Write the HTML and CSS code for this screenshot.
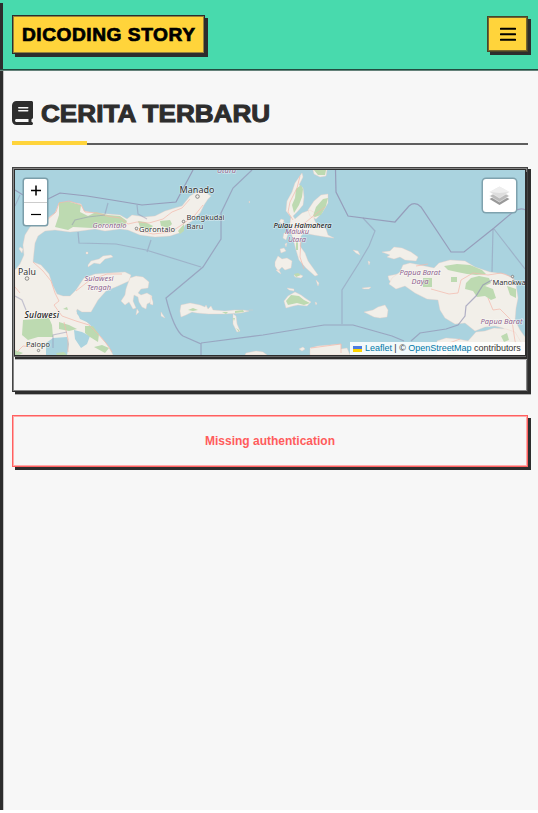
FILE: index.html
```html
<!DOCTYPE html>
<html lang="id">
<head>
<meta charset="utf-8">
<title>Dicoding Story</title>
<link rel="stylesheet" href="styles.css">
</head>
<body>
<div class="page">
  <header class="header">
    <a class="brand"><span class="brand-text">DICODING STORY</span></a>
    <button class="menu" aria-label="Menu"><svg width="16" height="14" viewBox="0 0 16 14"><path d="M.8 1.700h14.400M.8 7.200h14.400M.8 12.700h14.400" stroke="#000" stroke-width="2" stroke-linecap="round"/></svg></button>
  </header>
  <main class="main">
    <h1 class="title">
      <svg class="book" width="21" height="24" viewBox="0 0 448 512"><path fill="#2d2d2d" d="M96 0C43 0 0 43 0 96V416c0 53 43 96 96 96H416c17.700 0 32-14.300 32-32s-14.300-32-32-32V384c17.700 0 32-14.300 32-32V32c0-17.700-14.300-32-32-32H96zm0 384H352v64H96c-17.700 0-32-14.300-32-32s14.300-32 32-32zm32-240c0-8.800 7.200-16 16-16H336c8.800 0 16 7.200 16 16s-7.200 16-16 16H144c-8.800 0-16-7.200-16-16zm16 48H336c8.800 0 16 7.200 16 16s-7.200 16-16 16H144c-8.800 0-16-7.200-16-16s7.200-16 16-16z"/></svg>
      <span class="title-text">CERITA TERBARU</span>
    </h1>
    <section class="map-card">
      <div class="map">
        <svg class="tiles" viewBox="15 170 510 185" width="510" height="185">
          <rect x="15" y="170" width="510" height="185" fill="#aad3df"/>
          <g class="land">
            <path d="M15 270L20 264 24 255 23 245 25 235 30 227 35 222 45 220 55 213 59 203 70 202 81 204 84 211 95 213 108 214 120 215 127 219 132 215 145 217 155 216 165 211 175 208 182 206 186 201 190 196 197 192 203 191 211 196 208 199 204 205 200 213 192 221 185 225 182 232 170 236 155 237 140 235 128 230 120 229 105 231 95 229 80 231 70 232 55 230 45 231 38 236 35 243 34 252 33 262 41 265 49 274 53 286 57 294 63 296 70 296 76 290 84 278 95 274 110 273 125 272 131 275 129 281 118 286 106 291 98 300 91 312 82 312 77 309 77 314 86 321 93 328 101 337 109 347 113 355 15 355z"/>
            <path d="M127 286l3-8 6-2 7 1 6 5-1 6-7 1-3 4 3 2 6-2 5 3-1 6-4 2-1 5-4-2-3-5-1-5-4-2-1 6 3 7-3 1-4-7-4 3-4-4 4-6 1-6zM88 265l3-4 8-2 4-3 8-1 2 2-8 2-5 5-6-1-6 4zM23 249l-3-2-1 2 3 4zM86 252h2v2h-2zM249 201l1 1-1 1z"/>
            <path d="M137 309l2 3-3 3zM151 296l2 6v3l-3-1zM161 312l4 6-4-2z"/>
            <path d="M313 170h14l-1 6-6 1-6-3zM302 173L303 177 299 185 303 188 304 197 303 205 298 211 293 216 295 219 302 213 310 210 315 213 314 219 316 223 326 229 328 235 334 238 326 237 314 235 304 233 301 236 300 246 305 253 308 261 318 275 315 276 306 268 299 260 296 250 293 238 289 229 291 217 286 211 287 201 292 192 295 183zM308 210L314 201 321 195 328 194 328 203 322 213 316 219 310 216z"/>
            <path d="M281 219l3 1-1 4-4-2zM284 233l4 1-2 6-3-2zM285 244l2-1-1 4zM275 262l3-6 4 3 5-1 5 3-1 7-6 2-3-3-4 4-3-5zM280 249l4-1 2 3-5 2zM276 270l3 0 2 4-3-2z"/>
            <path d="M294 275l5-1 4 2-2 2-6-1zM284 301l4-5 7-4 6 3 4 3 6 4-4 4-9-1-5 1-7 2zM287 288l7 1v2l-5-1zM315 302l2 1-1 2zM316 280l3 3-1 3zM353 250l5 1 2 4-4-2z"/>
            <path d="M180 311l1-6 9-2 10 2 5 2 1-2 2 4 3-3 2 4 12 1 10-1 8 0 6 1-8 2-18 1-14 0-12-1-5-1-6 3-5 2zM233 314l3 2 1 8 3 7-3 1-4-8zM249 310h4"/>
            <path d="M364 312l9-2 5-3 7-2 3 5-1 7-7 1-6-1-6-3zM362 288l9-1-2 2-5 0zM382 252l8-1 4-4 8 1 9 4 7 5-2 4-11-1-5-3-6 2-7-2 3-2zM368 261l2 1-1 3zM388 276l10-2 5-4 9 6-8 8-9 1-6-5z"/>
            <path d="M400 272L403 265 410 263 420 265 434 268 439 263 450 260 465 261 475 267 490 272 505 274 512 278 516 285 518 298 516 308 515 320 520 330 525 337V348L512 336 503 328 495 326 485 327 475 331 465 323 455 324 445 318 440 310 438 300 427 299 415 293 405 286 396 289 389 284 392 278z"/>
            <path d="M437 355v-14l9-3 12 1 10 2 8-9 9-1 9-3 12 1 9 3 6 10 4 6v8zM310 355v-7l8-2 23-2v5l6-1 3 7zM299 349l4-2 2 2-3 2zM246 353l10-2 7 1 4 3h-22z"/>
          </g>
          <g fill="#aad3df"><path d="M46 343l7-5 14-1 2 7-2 11H46zM74 330l8 2 8 4-3 8-6 4-6-9zM76 310l7 6 6 7-9-4z"/></g>
          <g class="forest">
            <path d="M59 202L70 202 81 205 80 212 88 216 96 212 108 215 120 216 127 221 124 227 108 224 92 228 73 227 68 230 55 227 59 215z"/>
            <path d="M23 320l26-2 3 7 1 12h-15l-10 3-6-5zM59 322l10 3 8 4-8 2-10-2zM85 326h8l6 8-1 8-8-5-5-4zM94 347l8-2 7 3-4 5zM15 350l8 3-4 2h-4zM56 353l8-1 3 3h-10zM63 309l4-2 1 3z"/>
            <path d="M138 221l7 1 8 4-4 4-9-3zM160 221l10-1 2 4-4 4-7-2zM178 231l6-7v7l-4 3zM292 205l3-7 1-9 5-4 2 4-1 8-3 8-5 8zM313 216l3-9 7-8 5-1-2 8-5 9-6 2zM314 170h12l-1 5-7 0zM296 242h2v8h-2zM188 310l5-2 5 2-5 1zM222 312h6l-2 2zM235 311l8-1 1 2-9 1zM233 318h2l-1 3zM236 328l3 2v2zM286 301l5-6 8 1 5 4 6 3-6 2-7-2-9 2zM294 274l4-1 3 2-5 2z"/>
            <path d="M444 266l13-2 13 1 12 5 4 4-10 1-9-1-10-2-9-2zM466 283l5-5 8-2 10 2 2 5-6 3 8 3 3 9-5 2-6-4-8 1-4-6-8-2zM451 277h6v5h-6zM423 278h9v9h-9zM507 286l9 3v9l-6-3zM501 336l6-3 2 7-5 2zM447 353l8-1 5 3h-13z"/>
          </g>
          <g class="roads">
            <path d="M34 225l13-5 9-8 3-9 10-2 12 4 4 7 12 1 10 3 13 2 8 6 9-2 12 1 14-4 9-7 10-4 8-9M135 230l18 4 18-2 12-8 12-9 8-10"/>
            <path d="M33 262l10 9 8 10 4 12 4 8-5 4 8 11 14 5 13 4 9 9 8 9 6 9M76 291l14-11 17-6 15 0M20 293l-5-6M64 322l4 17v13M293 220l-5-8 2-10 7-14 3-12M293 230l13-8 11-9 8-6M301 240l-1 17 4 12M431 289l18 5 9-1 3-13 12-7 15 2 13-2 11 4 6 8M488 298l5 12 7-1 12 12 3 20 5 12M311 348l30-4v9M436 348l24-9M17 352l6-6 10 1M416 266l12-2"/>
          </g>
          <g class="bounds">
            <path d="M15 190l8 5M46 200l14-7 27 3 25 4 30 5 34-3 17-32M335.500 170l.5 22 12 24 47 6 14-16q6-5 12 1l30 45h13l30-24 19-16q7-5 13-2"/>
            <path d="M252 170l-19 18-12 25v26l-18 28-37 31q8 32 17 38l18 8v12M201 343l62-8 61-10h29l39 11 12 5M411 341l9-8 26-4 12-4 7-9 1-10 10-10 7-11 9-5" opacity=".85"/>
            <path d="M78 232l1 11 37 1 30 6 55 17M151 240l-4 12M137 205l1 9 9 5M105 214l3-11M72 225l3-5 13-3 17-2M53 348v-13l14-3M342 324v-34l17-27 10-17 6-15-12-13M493 229l-1 43M494 229l31 40M15 296l7 4 4 10M15 206l5-11" opacity=".6"/>
          </g>
          <g class="dots"><circle cx="197.500" cy="196.500" r="1.800"/><circle cx="183.500" cy="221.500" r="1.300"/><circle cx="136.500" cy="228.500" r="1.300"/><circle cx="27" cy="278.500" r="1.800"/><circle cx="38.500" cy="350.500" r="1.200"/><circle cx="512.500" cy="276.500" r="1.200"/></g>
          <g class="label region">
            <text x="92.500" y="228" font-size="7.500" textLength="34">Gorontalo</text>
            <text x="84.500" y="281" font-size="7.500" textLength="29">Sulawesi</text><text x="87" y="290" font-size="7.500" textLength="24">Tengah</text>
            <text x="285" y="233.500" font-size="7.500" textLength="24">Maluku</text><text x="288" y="242" font-size="7.500" textLength="18">Utara</text>
            <text x="217" y="173" font-size="7.500" textLength="19">Utara</text>
            <text x="399.500" y="275" font-size="7.500" textLength="41">Papua Barat</text><text x="411.500" y="284" font-size="7.500" textLength="17">Daya</text>
            <text x="480.500" y="324" font-size="7.500" textLength="42">Papua Barat</text>
          </g>
          <g class="label">
            <text x="179.500" y="193" font-size="9" textLength="35">Manado</text>
            <text x="186.500" y="220" font-size="7.500" textLength="38">Bongkudai</text>
            <text x="186.500" y="229" font-size="7.500" textLength="17">Baru</text>
            <text x="139" y="232" font-size="7.500" textLength="36">Gorontalo</text>
            <text x="18" y="274.500" font-size="8.800" textLength="18">Palu</text>
            <text x="26" y="347" font-size="7.500" textLength="24">Palopo</text>
            <text x="492.500" y="285" font-size="7.500" textLength="38">Manokwari</text>
          </g>
          <g class="label island"><text x="24.500" y="318" font-size="8.500" textLength="34.500">Sulawesi</text><text x="273.500" y="227.500" font-size="7.500" textLength="58">Pulau Halmahera</text></g>
        </svg>
        <div class="zoom"><span class="zoom-button"><svg width="23" height="23" viewBox="0 0 23 23"><path d="M7 11.500h10M12 6.500v10" stroke="#000" stroke-width="1.500"/></svg></span><span class="zoom-button"><svg width="23" height="22" viewBox="0 0 23 22"><path d="M7 11.500h10" stroke="#000" stroke-width="1.200"/></svg></span></div>
        <div class="layers"><svg width="21" height="20" viewBox="0 0 21 20"><path d="M.5 13L10.500 8l10 5-10 6z" fill="#999"/><path d="M.5 10l10-6 10 6-10 6z" fill="#bbb" stroke="#fff" stroke-width=".5"/><path d="M.5 6l10-5.500L20.500 6l-10 6z" fill="#ddd" stroke="#fff" stroke-width=".4"/><path d="M.5 6l10-5.500L20.500 6l-10 1z" fill="#eee"/></svg></div>
        <div class="attribution"><i class="flag"></i><span class="credit"><a>Leaflet</a> | © <a>OpenStreetMap</a> contributors</span></div>
      </div>
    </section>
    <div class="error">Missing authentication</div>
  </main>
</div>
</body>
</html>
```
FILE: styles.css
```css
* { box-sizing: border-box; }
body { margin: 0; background: #fff; font-family: "Liberation Sans", Arial, sans-serif; }
.page { height: 810px; background: linear-gradient(90deg, #2d2d2d 3px, #c4c4c4 3px, #c4c4c4 4px, #f7f7f7 4px); }
.header {
  height: 71px; display: flex; justify-content: space-between; align-items: flex-start;
  padding: 15px 10px 0 12px; border-bottom: 1px solid #64827a;
  box-shadow: inset 0 -1px #224c40;
  background: linear-gradient(#2d2d2d, #2d2d2d) 0 3px / 3px 100% no-repeat, #48daad;
}
.brand {
  width: 193px; height: 39px; padding-left: 9px; display: flex; align-items: center;
  background: #ffd43b; border: 1px solid #2d2d2d;
  box-shadow: inset 0 0 0 1px #96803c, 3px 3px #2d2d2d;
}
.brand-text {
  font-size: 18px; font-weight: 700; line-height: 20px; color: #000; white-space: nowrap;
  -webkit-text-stroke: .7px #000; letter-spacing: .5px; transform: scaleX(1.064); transform-origin: left;
}
.menu {
  width: 41px; height: 36px; margin-top: 1px; padding: 0; display: flex; align-items: center; justify-content: center;
  background: #ffd43b; border: 1px solid #4a4528; box-shadow: inset 0 0 0 1px #75642f, 3px 3px #2d2d2d;
}
.main { padding: 29px 10px 0 12px; }
.title {
  margin: 0 0 22px; height: 45px; display: flex; align-items: flex-start; gap: 8px;
  background: linear-gradient(#ffd43b, #ffd43b) 0 41px / 75px 4px no-repeat,
    linear-gradient(#5e5e5e, #5e5e5e) 0 43px / 100% 2px no-repeat;
}
.book { margin-top: 1px; }
.title-text {
  font-size: 24px; line-height: 27px; color: #2d2d2d; white-space: nowrap;
  -webkit-text-stroke: 1px #2d2d2d; transform: scaleX(1.088); transform-origin: left;
}
.map-card {
  height: 225px; padding: 1px; border: 1px solid #444; border-bottom-color: #2d2d2d;
  box-shadow: inset 0 0 0 1px #858585, 3px 2px #2d2d2d, 3px 3px #b0b0b0;
}
.map { position: relative; height: 187px; border: 1px solid #2d2d2d; box-shadow: 0 1px #686868, 1px 3px #2d2d2d, 1px 4px #b4b4b4; }
.tiles { display: block; font-family: "Noto Sans", sans-serif; }
.land { fill: #f2efe9; stroke: #f0cfc3; stroke-width: .35; }
.forest { fill: #bddab1; }
.roads { fill: none; stroke: #f3b8ab; stroke-width: .7; }
.bounds { fill: none; stroke: #9190b2; stroke-width: 1.2; stroke-opacity: .8; }
.dots { fill: #f2efe9; stroke: #666; stroke-width: .7; }
.label { fill: #333; stroke: #fff; stroke-width: 1.2px; stroke-opacity: .6; paint-order: stroke; }
.island { font-style: italic; font-weight: 500; fill: #222; }
.region { font-style: italic; fill: #8d618b; }
.zoom {
  position: absolute; left: 9px; top: 9px; width: 23px; height: 46px;
  background: #fff; border-radius: 2px; box-shadow: 0 0 0 1.5px #7b9eaa;
}
.zoom-button { display: block; height: 23px; }
.zoom-button svg { display: block; }
.zoom-button + .zoom-button { border-top: 1px solid #ccc; }
.layers {
  position: absolute; right: 9px; top: 9px; width: 33px; height: 33px; display: flex; align-items: center; justify-content: center;
  background: #fff; border-radius: 3px; box-shadow: 0 0 0 1.5px #7fa2ae;
}
.attribution {
  position: absolute; right: 0; bottom: 0; width: 175px; height: 13px; padding: 0 3px; display: flex; align-items: center; gap: 3px;
  background: rgba(255, 255, 255, .85);
}
.flag { flex: none; width: 9px; height: 6px; background: linear-gradient(#4c7be1 50%, #ffd500 50%); }
.credit { font-size: 9px; line-height: 13px; color: #333; white-space: nowrap; letter-spacing: -.02px; }
.credit a { color: #0078a8; }
.error {
  height: 52px; margin-top: 23px; border: 1px solid #ff6060;
  box-shadow: inset 0 0 0 1px #ffaaa9, 3px 3px #2d2d2d;
  color: #ff5c5c; font-size: 12px; font-weight: 700; line-height: 50px; text-align: center;
}
```
